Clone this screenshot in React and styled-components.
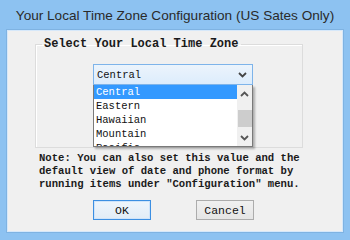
import React from "react";
import styled, { createGlobalStyle } from "styled-components";

const Global = createGlobalStyle`
  html, body { margin: 0; padding: 0; }
  body { width: 350px; height: 240px; overflow: hidden; background: #8dc2f1; }
`;

const Window = styled.div`
  width: 350px;
  height: 240px;
  box-sizing: border-box;
  background: #8dc2f1;
  display: flex;
  flex-direction: column;
  padding: 0 7px 8px 7px;
`;

const TitleBar = styled.div`
  height: 30px;
  display: flex;
  align-items: center;
  justify-content: center;
  font-family: "Liberation Sans", Arial, sans-serif;
  font-size: 13.6px;
  white-space: nowrap;
  color: #2a2a2a;
  padding-top: 1px;
  box-sizing: border-box;
`;

const Client = styled.div`
  flex: 1;
  background: #f0f0f0;
  border: 1px solid #d6e8fa;
  box-shadow: 0 0 0 1px #7fb3e2;
  display: flex;
  flex-direction: column;
  padding: 6px 0 0 27px;
  box-sizing: border-box;
`;

const Group = styled.fieldset`
  margin: 0;
  width: 268px;
  box-sizing: border-box;
  border: 1px solid #dcdcdc;
  box-shadow: inset 1px 1px 0 #ffffff;
  padding: 0;
`;

const Legend = styled.legend`
  margin-left: 6px;
  padding: 0 3px 0 2px;
  font-family: "Liberation Mono", "Courier New", monospace;
  font-weight: bold;
  font-size: 12px;
  line-height: 14px;
  color: #1a1a1a;
`;

const GroupBody = styled.div`
  padding: 13px 0 62px 57px;
`;

const ComboWrap = styled.div`
  position: relative;
  width: 160px;
`;

const Combo = styled.div`
  height: 21px;
  box-sizing: border-box;
  border: 1px solid #7eb4ea;
  background: linear-gradient(#ecf4fc, #dcecfc);
  display: flex;
  align-items: center;
  justify-content: space-between;
  padding: 0 5px 0 3px;
  font-family: "Liberation Mono", "Courier New", monospace;
  font-size: 10.5px;
  color: #111;
`;

const DropList = styled.div`
  position: absolute;
  left: 0;
  top: 21px;
  width: 160px;
  height: 62px;
  box-sizing: border-box;
  border: 1px solid #7a7a7a;
  border-top: none;
  background: #fff;
  display: flex;
  box-shadow: 2px 2px 2px rgba(0, 0, 0, 0.28);
  overflow: hidden;
  z-index: 2;
`;

const Items = styled.div`
  flex: 1;
  display: flex;
  flex-direction: column;
`;

const Item = styled.div`
  height: 14px;
  flex: none;
  line-height: 14px;
  padding-left: 2px;
  font-family: "Liberation Mono", "Courier New", monospace;
  font-size: 10.5px;
  color: ${(p) => (p.$selected ? "#ffffff" : "#111")};
  background: ${(p) => (p.$selected ? "#3399ff" : "transparent")};
`;

const Scroll = styled.div`
  width: 15px;
  background: #f0f0f0;
  display: flex;
  flex-direction: column;
  align-items: center;
`;

const ScrollArrow = styled.div`
  height: 17px;
  display: flex;
  align-items: center;
  justify-content: center;
`;

const Thumb = styled.div`
  width: 14px;
  height: 17px;
  margin-top: 8px;
  background: #cdcdcd;
`;

const Spacer = styled.div`
  flex: 1;
`;

const Note = styled.div`
  margin: 4px 0 0 4px;
  font-family: "Liberation Mono", "Courier New", monospace;
  font-weight: bold;
  font-size: 10.6px;
  line-height: 13px;
  color: #1a1a1a;
  white-space: pre;
`;

const Buttons = styled.div`
  display: flex;
  gap: 45px;
  padding-left: 58px;
  margin-top: 9px;
`;

const Button = styled.div`
  width: 58px;
  height: 20px;
  box-sizing: border-box;
  border: 1px solid ${(p) => (p.$default ? "#3c8fe2" : "#acacac")};
  box-shadow: ${(p) => (p.$default ? "inset 0 0 0 1px #cfe4fa" : "none")};
  background: ${(p) =>
    p.$default ? "linear-gradient(#eef5fc, #e2ecf6)" : "linear-gradient(#f0f0f0, #e5e5e5)"};
  display: flex;
  align-items: center;
  justify-content: center;
  font-family: "Liberation Mono", "Courier New", monospace;
  font-size: 11.5px;
  color: #111;
`;

const Chevron = ({ up, color = "#444" }) => (
  <svg width="9" height="6" viewBox="0 0 9 6">
    <path
      d={up ? "M1 5 L4.5 1.5 L8 5" : "M1 1 L4.5 4.5 L8 1"}
      fill="none"
      stroke={color}
      strokeWidth="1.8"
    />
  </svg>
);

export default function App() {
  const zones = ["Central", "Eastern", "Hawaiian", "Mountain", "Pacific"];
  return (
    <>
      <Global />
      <Window>
        <TitleBar>Your Local Time Zone Configuration (US Sates Only)</TitleBar>
        <Client>
          <Group>
            <Legend>Select Your Local Time Zone</Legend>
            <GroupBody>
              <ComboWrap>
                <Combo>
                  <span>Central</span>
                  <Chevron />
                </Combo>
                <DropList>
                  <Items>
                    {zones.map((z, i) => (
                      <Item key={z} $selected={i === 0}>
                        {z}
                      </Item>
                    ))}
                  </Items>
                  <Scroll>
                    <ScrollArrow>
                      <Chevron up color="#555" />
                    </ScrollArrow>
                    <Thumb />
                    <Spacer />
                    <ScrollArrow>
                      <Chevron color="#555" />
                    </ScrollArrow>
                  </Scroll>
                </DropList>
              </ComboWrap>
            </GroupBody>
          </Group>
          <Note>{`Note: You can also set this value and the
default view of date and phone format by
running items under "Configuration" menu.`}</Note>
          <Buttons>
            <Button $default>OK</Button>
            <Button>Cancel</Button>
          </Buttons>
        </Client>
      </Window>
    </>
  );
}
